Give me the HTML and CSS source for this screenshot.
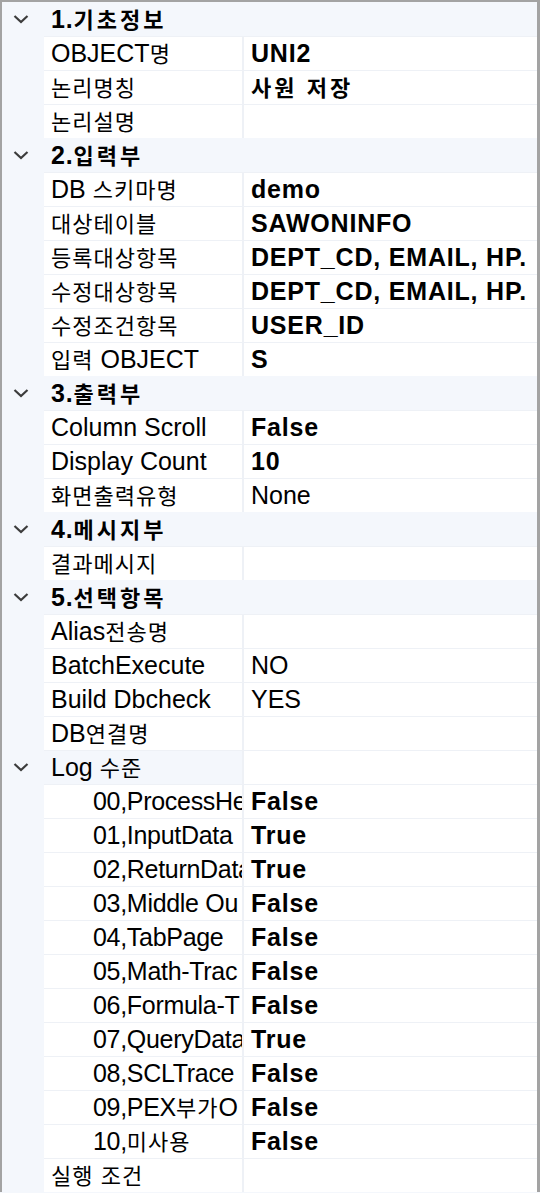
FILE: index.html
```html
<!DOCTYPE html>
<html lang="ko">
<head>
<meta charset="utf-8">
<title>Properties</title>
<link rel="stylesheet" href="styles.css">
</head>
<body>
<div class="grid">
  <div class="cat"><div class="margin"><svg class="chev" viewBox="0 0 16 10" width="16" height="10"><polyline points="1.5,2 8,8 14.5,2"/></svg></div><div class="cat-title">1.<span class="kob">기초정보</span></div></div>
  <div class="row"><div class="margin"></div><div class="name">OBJECT<span class="ko">명</span></div><div class="val b">UNI2</div></div>
  <div class="row"><div class="margin"></div><div class="name"><span class="ko">논리명칭</span></div><div class="val b"><span class="kob">사원 저장</span></div></div>
  <div class="row"><div class="margin"></div><div class="name"><span class="ko">논리설명</span></div><div class="val"></div></div>

  <div class="cat"><div class="margin"><svg class="chev" viewBox="0 0 16 10" width="16" height="10"><polyline points="1.5,2 8,8 14.5,2"/></svg></div><div class="cat-title">2.<span class="kob">입력부</span></div></div>
  <div class="row"><div class="margin"></div><div class="name">DB <span class="ko">스키마명</span></div><div class="val b">demo</div></div>
  <div class="row"><div class="margin"></div><div class="name"><span class="ko">대상테이블</span></div><div class="val b">SAWONINFO</div></div>
  <div class="row"><div class="margin"></div><div class="name"><span class="ko">등록대상항목</span></div><div class="val b">DEPT_CD, EMAIL, HP.</div></div>
  <div class="row"><div class="margin"></div><div class="name"><span class="ko">수정대상항목</span></div><div class="val b">DEPT_CD, EMAIL, HP.</div></div>
  <div class="row"><div class="margin"></div><div class="name"><span class="ko">수정조건항목</span></div><div class="val b">USER_ID</div></div>
  <div class="row"><div class="margin"></div><div class="name"><span class="ko">입력</span> OBJECT</div><div class="val b">S</div></div>

  <div class="cat"><div class="margin"><svg class="chev" viewBox="0 0 16 10" width="16" height="10"><polyline points="1.5,2 8,8 14.5,2"/></svg></div><div class="cat-title">3.<span class="kob">출력부</span></div></div>
  <div class="row"><div class="margin"></div><div class="name">Column Scroll</div><div class="val b">False</div></div>
  <div class="row"><div class="margin"></div><div class="name">Display Count</div><div class="val b">10</div></div>
  <div class="row"><div class="margin"></div><div class="name"><span class="ko">화면출력유형</span></div><div class="val">None</div></div>

  <div class="cat"><div class="margin"><svg class="chev" viewBox="0 0 16 10" width="16" height="10"><polyline points="1.5,2 8,8 14.5,2"/></svg></div><div class="cat-title">4.<span class="kob">메시지부</span></div></div>
  <div class="row"><div class="margin"></div><div class="name"><span class="ko">결과메시지</span></div><div class="val"></div></div>

  <div class="cat"><div class="margin"><svg class="chev" viewBox="0 0 16 10" width="16" height="10"><polyline points="1.5,2 8,8 14.5,2"/></svg></div><div class="cat-title">5.<span class="kob">선택항목</span></div></div>
  <div class="row"><div class="margin"></div><div class="name">Alias<span class="ko">전송명</span></div><div class="val"></div></div>
  <div class="row"><div class="margin"></div><div class="name">BatchExecute</div><div class="val">NO</div></div>
  <div class="row"><div class="margin"></div><div class="name">Build Dbcheck</div><div class="val">YES</div></div>
  <div class="row"><div class="margin"></div><div class="name">DB<span class="ko">연결명</span></div><div class="val"></div></div>
  <div class="row parent"><div class="margin"><svg class="chev" viewBox="0 0 16 10" width="16" height="10"><polyline points="1.5,2 8,8 14.5,2"/></svg></div><div class="name">Log <span class="ko">수준</span></div><div class="val"></div></div>
  <div class="row"><div class="margin"></div><div class="name sub">00,ProcessHe</div><div class="val b">False</div></div>
  <div class="row"><div class="margin"></div><div class="name sub">01,InputData</div><div class="val b">True</div></div>
  <div class="row"><div class="margin"></div><div class="name sub">02,ReturnData</div><div class="val b">True</div></div>
  <div class="row"><div class="margin"></div><div class="name sub">03,Middle Ou</div><div class="val b">False</div></div>
  <div class="row"><div class="margin"></div><div class="name sub">04,TabPage</div><div class="val b">False</div></div>
  <div class="row"><div class="margin"></div><div class="name sub">05,Math-Trac</div><div class="val b">False</div></div>
  <div class="row"><div class="margin"></div><div class="name sub">06,Formula-T</div><div class="val b">False</div></div>
  <div class="row"><div class="margin"></div><div class="name sub">07,QueryData</div><div class="val b">True</div></div>
  <div class="row"><div class="margin"></div><div class="name sub">08,SCLTrace</div><div class="val b">False</div></div>
  <div class="row"><div class="margin"></div><div class="name sub">09,PEX<span class="ko">부가</span>O</div><div class="val b">False</div></div>
  <div class="row"><div class="margin"></div><div class="name sub">10,<span class="ko">미사용</span></div><div class="val b">False</div></div>
  <div class="row"><div class="margin"></div><div class="name"><span class="ko">실행 조건</span></div><div class="val"></div></div>
</div>
</body>
</html>
```
FILE: styles.css
```css
* { box-sizing: border-box; }
html, body { margin: 0; padding: 0; }
body {
  width: 540px;
  height: 1193px;
  overflow: hidden;
  background: #f4f7fc;
  font-family: "Liberation Sans", Arial, "Noto Sans CJK KR", sans-serif;
  font-size: 25px;
  color: #000;
}
.grid {
  width: 540px;
  border-top: 2px solid #a3a3a3;
  border-left: 2px solid #a3a3a3;
  border-right: 3px solid #a3a3a3;
  background: #f4f7fc;
}
.row, .cat {
  display: flex;
  height: 34px;
  line-height: 35.4px;
  white-space: nowrap;
}
.cat { background: #f4f7fc; }
.margin {
  flex: 0 0 42px;
  width: 42px;
  background: #f4f7fc;
}
.chev {
  display: block;
  margin: 12px 0 0 11px;
  fill: none;
  stroke: #3c3c3c;
  stroke-width: 2.2;
}
.cat-title {
  padding-left: 7px;
  font-weight: bold;
  letter-spacing: 0.8px;
}
.name {
  flex: 0 0 200px;
  width: 200px;
  background: #fff;
  padding-left: 7px;
  overflow-x: clip;
  overflow-y: visible;
  border-right: 2px solid #eef1f6;
  box-shadow: inset 0 1px 0 #eef1f6;
}
.name.sub { padding-left: 49px; letter-spacing: -0.3px; }
.parent .name { background: #f4f7fc; }
.val {
  flex: 1 1 auto;
  min-width: 0;
  background: #fff;
  padding-left: 7px;
  overflow-x: clip;
  overflow-y: visible;
  box-shadow: inset 0 1px 0 #eef1f6;
}
.val.b { font-weight: bold; letter-spacing: 0.8px; }
.ko {
  font-family: "Noto Sans CJK KR", sans-serif;
  font-size: 22px;
  line-height: 1;
  letter-spacing: 1px;
}
.kob {
  font-family: "Noto Sans CJK KR", sans-serif;
  font-size: 22px;
  font-weight: bold;
  line-height: 1;
  letter-spacing: 3px;
}
```
